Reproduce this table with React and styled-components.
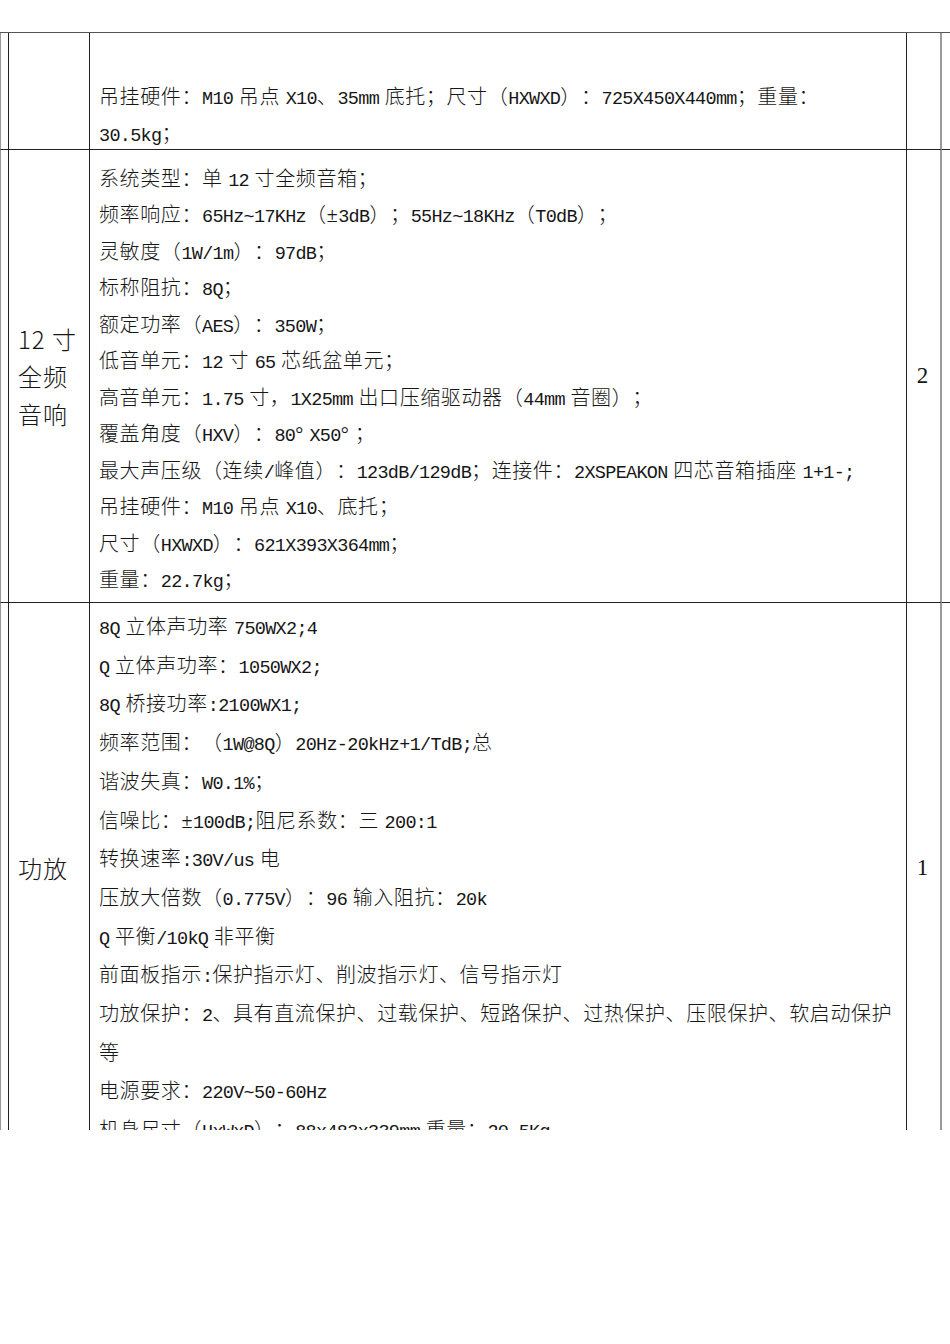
import styled, { createGlobalStyle } from 'styled-components';

const GlobalStyle = createGlobalStyle`
  html, body {
    margin: 0;
    padding: 0;
    background: #fff;
  }
  body {
    font-family: "Liberation Serif", "Noto Sans CJK SC", serif;
    color: #161616;
    text-spacing-trim: space-all;
  }
`;

const Page = styled.div`
  box-sizing: border-box;
  width: 950px;
  height: 1130px;
  padding-top: 32px;
  overflow: hidden;
`;

const Table = styled.div`
  display: grid;
  grid-template-columns: 9px 81px 817px 35px 1fr;
  grid-template-rows: 117px 453px 531px;
  border-top: 1px solid #555;
`;

const Cell = styled.div`
  box-sizing: border-box;
  border-bottom: 1px solid #222;
  border-right: 1px solid #222;
  min-width: 0;
`;

const EdgeCell = styled(Cell)`
  border-left: 1px solid #999;
`;

const TailCell = styled(Cell)`
  border-right: none;
`;

const NameCell = styled(Cell)`
  display: flex;
  flex-direction: column;
  justify-content: center;
  padding-left: 9px;
  font-family: "Noto Sans CJK SC", sans-serif;
  font-size: 24px;
  font-weight: 300;
  line-height: 37.5px;
  letter-spacing: 1px;
`;

const QtyCell = styled(Cell)`
  display: flex;
  align-items: center;
  justify-content: center;
  border-right: 2px solid #9a9a9a;
  font-size: 23px;
  padding-right: 2px;
`;

const DescCell = styled(Cell)`
  padding: ${(p) => p.$pt}px 0 0 9px;
  overflow: hidden;
  font-size: 20px;
  font-weight: 300;
  letter-spacing: 0.6px;
  line-height: ${(p) => p.$lh}px;
`;

const Line = styled.div`
  white-space: nowrap;
`;

// half-width runs: digits, latin letters, ascii punctuation
const Latin = styled.span`
  font-family: "Liberation Mono", monospace;
  font-size: 18.5px;
  line-height: 1;
  letter-spacing: -0.7px;
`;

const splitLatin = (text) =>
  text.split(/([!-~]+)/).map((part, i) =>
    i % 2 ? <Latin key={i}>{part}</Latin> : part
  );

const rows = [
  {
    name: [],
    qty: '',
    pt: 46,
    lh: 36.5,
    lines: [
      '吊挂硬件：M10 吊点 X10、35mm 底托；尺寸（HXWXD）：725X450X440mm；重量：',
      '30.5kg；',
    ],
  },
  {
    name: ['12 寸', '全频', '音响'],
    qty: '2',
    pt: 11,
    lh: 36.45,
    lines: [
      '系统类型：单 12 寸全频音箱；',
      '频率响应：65Hz~17KHz（±3dB）；55Hz~18KHz（T0dB）；',
      '灵敏度（1W/1m）：97dB；',
      '标称阻抗：8Q；',
      '额定功率（AES）：350W；',
      '低音单元：12 寸 65 芯纸盆单元；',
      '高音单元：1.75 寸，1X25mm 出口压缩驱动器（44mm 音圈）；',
      '覆盖角度（HXV）：80° X50° ；',
      '最大声压级（连续/峰值）：123dB/129dB；连接件：2XSPEAKON 四芯音箱插座 1+1-;',
      '吊挂硬件：M10 吊点 X10、底托；',
      '尺寸（HXWXD）：621X393X364mm；',
      '重量：22.7kg；',
    ],
  },
  {
    name: ['功放'],
    qty: '1',
    pt: 5,
    lh: 38.7,
    lines: [
      '8Q 立体声功率 750WX2;4',
      'Q 立体声功率：1050WX2;',
      '8Q 桥接功率:2100WX1;',
      '频率范围：（1W@8Q）20Hz-20kHz+1/TdB;总',
      '谐波失真：W0.1%；',
      '信噪比：±100dB;阻尼系数：三 200:1',
      '转换速率:30V/us 电',
      '压放大倍数（0.775V）：96 输入阻抗：20k',
      'Q 平衡/10kQ 非平衡',
      '前面板指示:保护指示灯、削波指示灯、信号指示灯',
      '功放保护：2、具有直流保护、过载保护、短路保护、过热保护、压限保护、软启动保护',
      '等',
      '电源要求：220V~50-60Hz',
      '机身尺寸（HxWxD）：88x483x339mm 重量：20.5Kg',
    ],
  },
];

export default function App() {
  return (
    <>
      <GlobalStyle />
      <Page>
        <Table>
          {rows.map((row, i) => (
            <div key={i} style={{ display: 'contents' }}>
              <EdgeCell />
              <NameCell>
                {row.name.map((n) => (
                  <span key={n}>{n}</span>
                ))}
              </NameCell>
              <DescCell $pt={row.pt} $lh={row.lh}>
                {row.lines.map((l, j) => (
                  <Line key={j}>{splitLatin(l)}</Line>
                ))}
              </DescCell>
              <QtyCell>{row.qty}</QtyCell>
              <TailCell />
            </div>
          ))}
        </Table>
      </Page>
    </>
  );
}
